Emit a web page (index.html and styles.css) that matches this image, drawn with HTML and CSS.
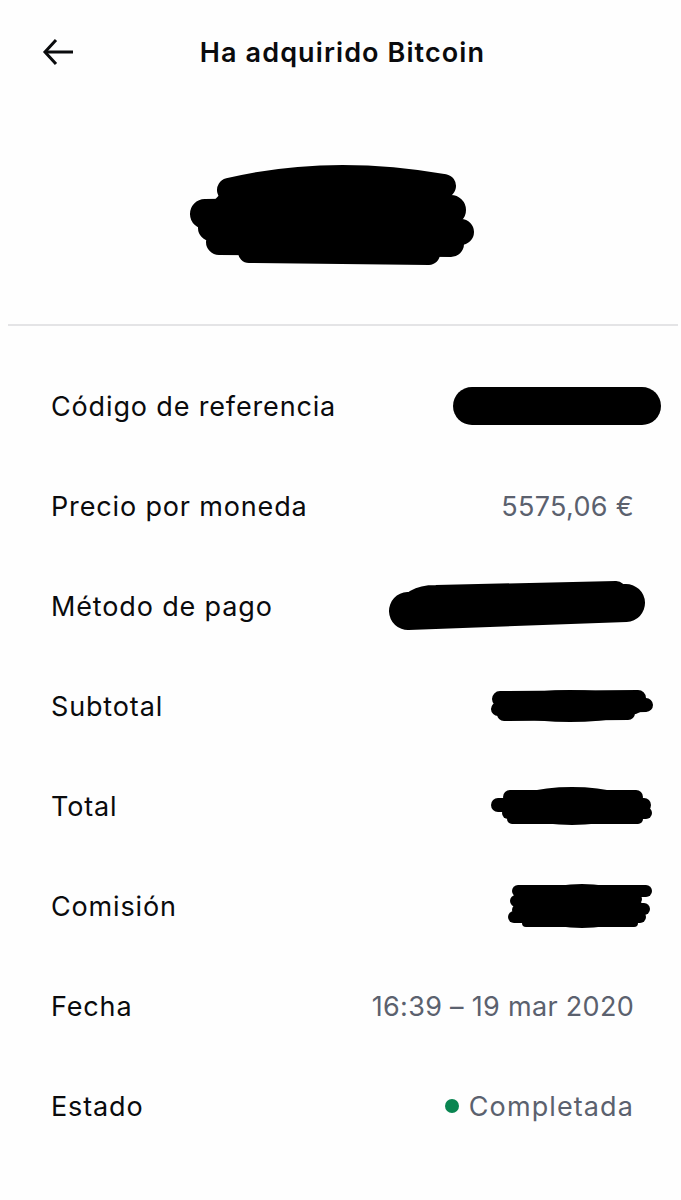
FILE: index.html
```html
<!DOCTYPE html>
<html lang="es">
<head>
<meta charset="utf-8">
<title>Ha adquirido Bitcoin</title>
<link rel="stylesheet" href="styles.css">
</head>
<body>
<div class="screen">
  <header class="topbar">
    <button class="back" aria-label="Volver">
      <svg width="32" height="28" viewBox="0 0 32 28" fill="none" stroke="#0a0b0d" stroke-width="3" stroke-linecap="butt" stroke-linejoin="miter">
        <path d="M31 14H3"/>
        <path d="M14 2L3 14L14 26"/>
      </svg>
    </button>
    <h1 class="title">Ha adquirido Bitcoin</h1>
  </header>

  <section class="hero">
    <svg class="scribble hero-scribble" width="285" height="107" viewBox="0 0 285 107">
      <g fill="#000" stroke="#000" stroke-linecap="round">
        <ellipse cx="142" cy="52" rx="122" ry="47" stroke="none"/>
        <path d="M40 28 Q140 4 255 24" stroke-width="24" fill="none"/>
        <path d="M16 52 L262 48" stroke-width="30"/>
        <path d="M22 66 L272 70" stroke-width="26"/>
        <path d="M30 80 L262 82" stroke-width="26"/>
        <path d="M60 90 L240 92" stroke-width="22"/>
      </g>
    </svg>
  </section>

  <hr class="divider">

  <dl class="details">
    <div class="row">
      <dt>Código de referencia</dt>
      <dd>
        <svg class="scribble" width="214" height="44" viewBox="0 0 214 44">
          <path d="M22 22 Q30 4 50 8 L192 8 Q208 10 196 24 L190 36 L30 38 Q12 36 22 22Z" fill="#000"/>
          <path d="M22 22 L192 22" stroke="#000" stroke-width="38" stroke-linecap="round"/>
        </svg>
      </dd>
    </div>
    <div class="row">
      <dt>Precio por moneda</dt>
      <dd class="value">5575,06 €</dd>
    </div>
    <div class="row">
      <dt>Método de pago</dt>
      <dd class="pay">
        <svg class="scribble" width="262" height="50" viewBox="0 0 262 50">
          <path d="M22 30 L240 22" stroke="#000" stroke-width="38" stroke-linecap="round"/>
          <path d="M24 28 Q26 14 50 14 L230 10" stroke="#000" stroke-width="20" stroke-linecap="round" fill="none"/>
        </svg>
      </dd>
    </div>
    <div class="row">
      <dt>Subtotal</dt>
      <dd class="tight">
        <svg class="scribble" width="168" height="38" viewBox="0 0 168 38">
          <g stroke="#000" stroke-linecap="round" fill="#000">
            <ellipse cx="82" cy="19" rx="76" ry="16" stroke="none"/>
            <path d="M12 12 L150 11" stroke-width="16"/>
            <path d="M10 22 L158 18" stroke-width="14"/>
            <path d="M16 27 L140 26" stroke-width="14"/>
          </g>
        </svg>
      </dd>
    </div>
    <div class="row">
      <dt>Total</dt>
      <dd class="tight">
        <svg class="scribble" width="166" height="42" viewBox="0 0 166 42">
          <g stroke="#000" stroke-linecap="round" fill="#000">
            <ellipse cx="82" cy="21" rx="66" ry="19" stroke="none"/>
            <path d="M20 12 L146 12" stroke-width="14"/>
            <path d="M8 20 L154 20" stroke-width="14"/>
            <path d="M18 28 L156 28" stroke-width="12"/>
            <path d="M22 34 L148 34" stroke-width="10"/>
          </g>
        </svg>
      </dd>
    </div>
    <div class="row">
      <dt>Comisión</dt>
      <dd class="tight">
        <svg class="scribble" width="150" height="50" viewBox="0 0 150 50">
          <g stroke="#000" stroke-linecap="round" fill="#000">
            <ellipse cx="76" cy="25" rx="60" ry="22" stroke="none"/>
            <path d="M12 10 L140 10" stroke-width="12"/>
            <path d="M10 20 L130 18" stroke-width="12"/>
            <path d="M12 29 L138 28" stroke-width="12"/>
            <path d="M8 36 L134 36" stroke-width="12"/>
            <path d="M20 42 L128 42" stroke-width="8"/>
          </g>
        </svg>
      </dd>
    </div>
    <div class="row">
      <dt>Fecha</dt>
      <dd class="value">16:39 – 19 mar 2020</dd>
    </div>
    <div class="row">
      <dt>Estado</dt>
      <dd class="value status"><span class="dot"></span>Completada</dd>
    </div>
  </dl>
</div>
</body>
</html>
```

FILE: styles.css
```css
* { box-sizing: border-box; }

html, body {
  margin: 0;
  padding: 0;
  background: #fefefe;
}

body {
  font-family: Inter, "Noto Sans", "Liberation Sans", sans-serif;
  color: #0a0b0d;
}

.screen {
  width: 681px;
  min-height: 1200px;
  display: flex;
  flex-direction: column;
}

.topbar {
  height: 104px;
  display: flex;
  align-items: center;
  justify-content: center;
  position: relative;
}

.back {
  position: absolute;
  left: 42px;
  top: 38px;
  padding: 0;
  margin: 0;
  border: 0;
  background: none;
  display: flex;
}

.title {
  margin: 0;
  font-size: 27px;
  font-weight: 600;
  letter-spacing: 1.1px;
  padding-left: 4px;
}

.hero {
  height: 220px;
  display: flex;
  justify-content: center;
  align-items: flex-start;
  padding-top: 58px;
  padding-right: 18px;
}

.scribble { display: block; }

.divider {
  margin: 0 3px 0 8px;
  border: 0;
  border-top: 2px solid #e4e4e6;
  height: 0;
}

.details {
  margin: 30px 0 0 0;
  padding: 0 47px 0 51px;
  display: flex;
  flex-direction: column;
}

.row {
  height: 100px;
  display: flex;
  align-items: center;
  justify-content: space-between;
}

.row dt {
  font-size: 27px;
  font-weight: 400;
  color: #0a0b0d;
  letter-spacing: 0.85px;
}

.row dd {
  margin: 0 -30px 0 0;
  display: flex;
  align-items: center;
}

.row dd.tight { margin-right: -22px; }

.row dd.pay { margin-right: -14px; }

.value {
  font-size: 27px;
  color: #5b616e;
  letter-spacing: 0.3px;
  margin-right: 0 !important;
}

.status {
  gap: 10px;
  letter-spacing: 1.1px;
}

.dot {
  width: 14px;
  height: 14px;
  border-radius: 50%;
  background: #098551;
  display: inline-block;
}
```
